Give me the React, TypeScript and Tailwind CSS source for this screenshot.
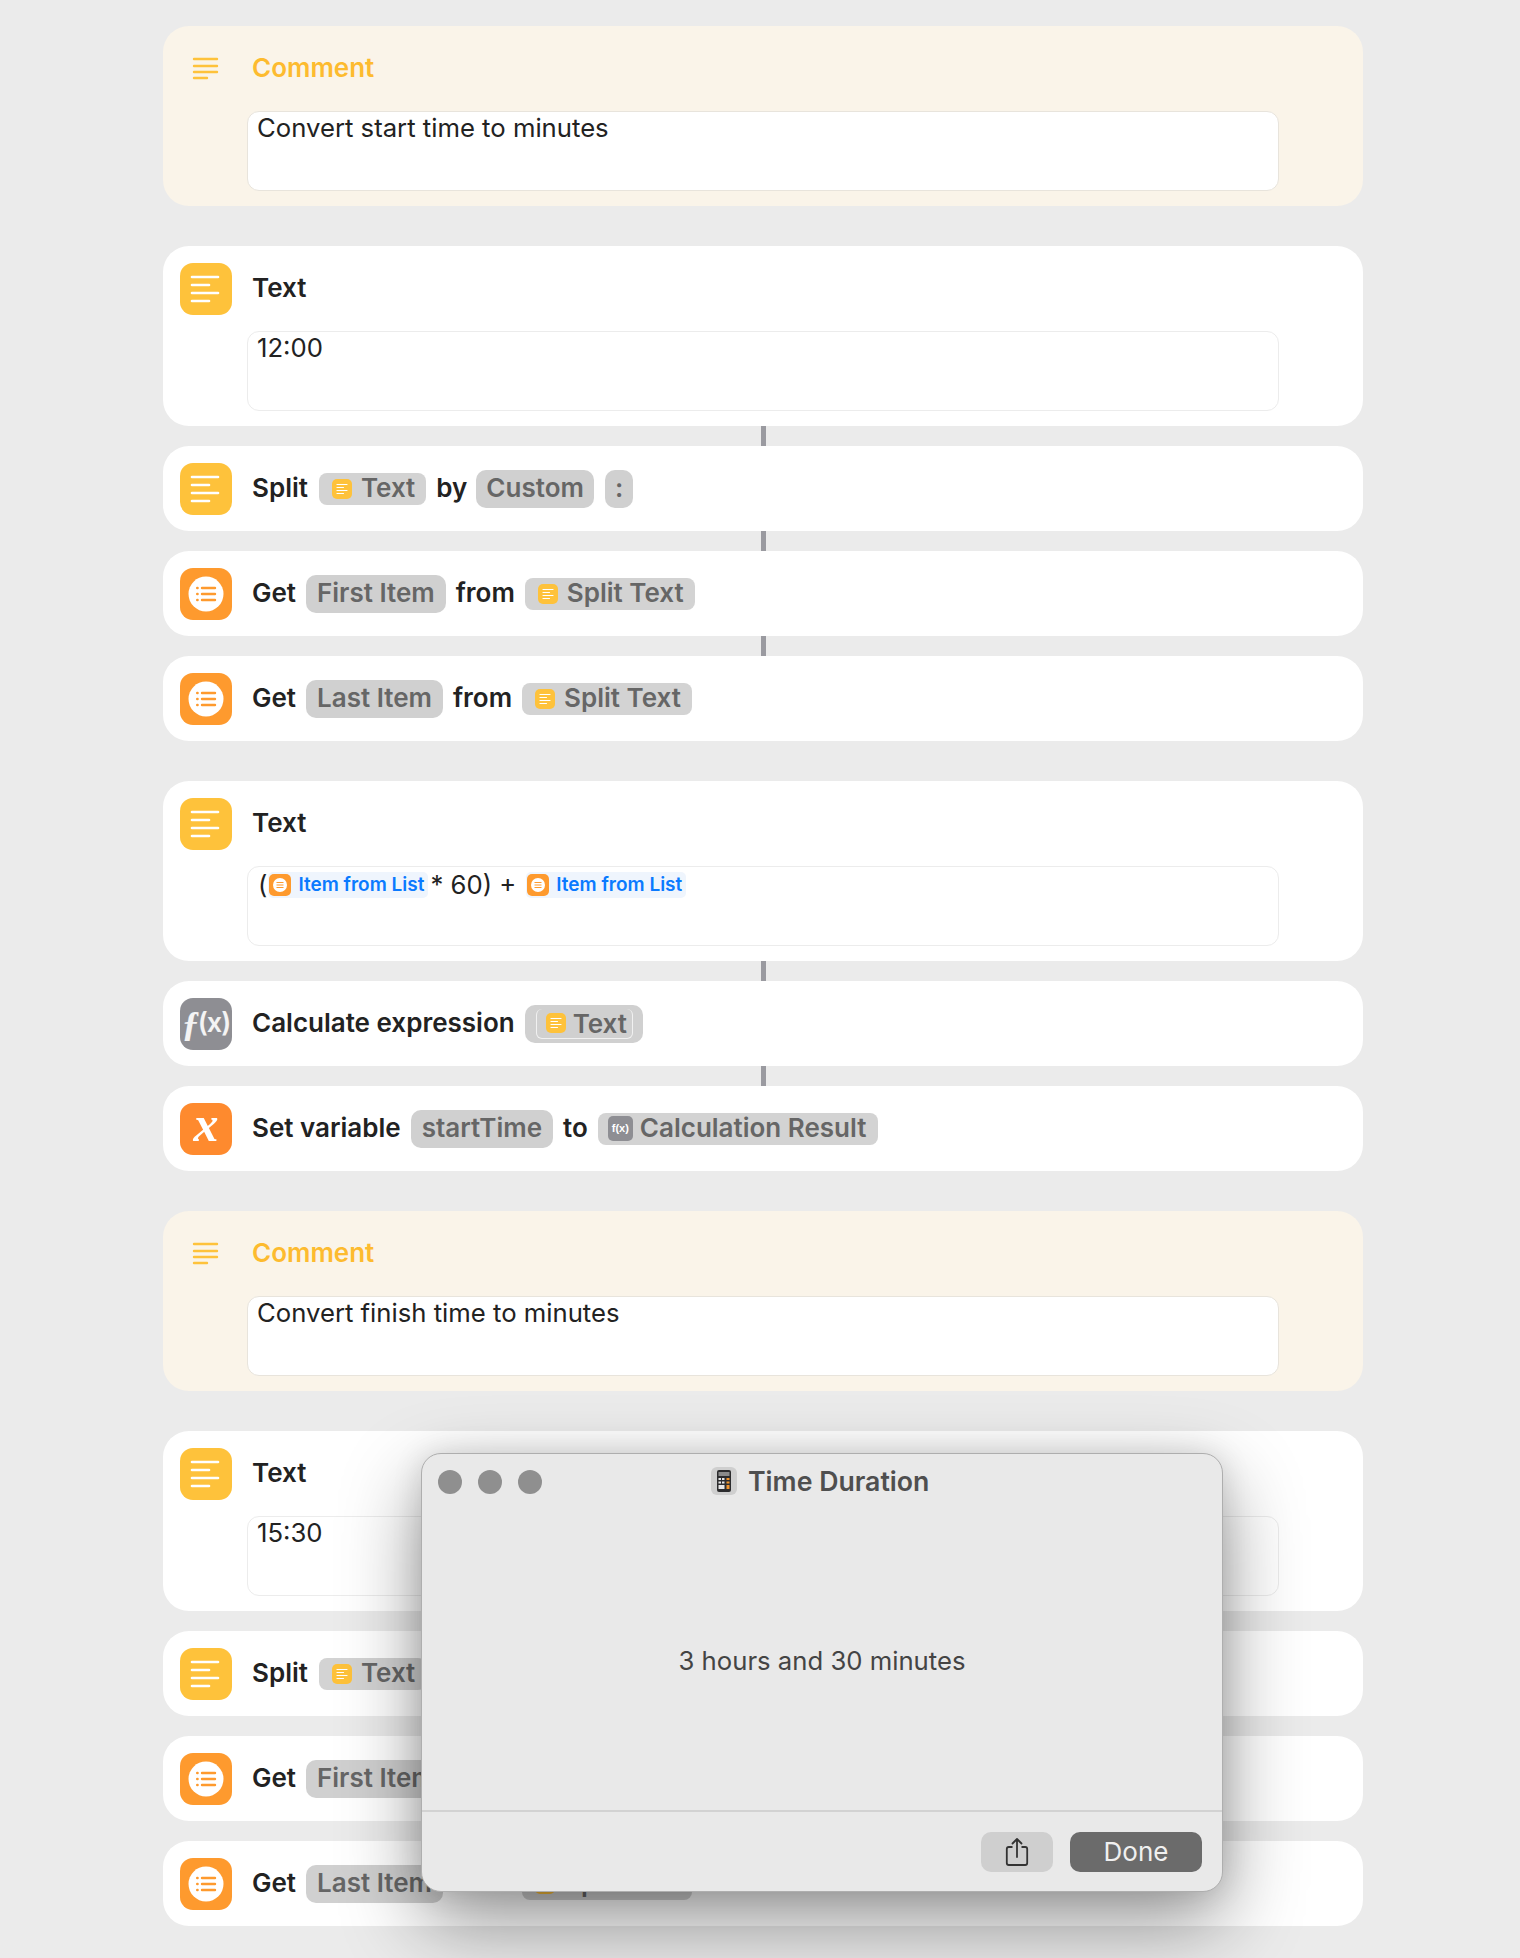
import React from "react";

const TextIcon = () => (
  <div className="h-[52px] w-[52px] shrink-0 rounded-[13px] bg-[#fec23b]">
    <svg viewBox="0 0 52 52" className="h-[52px] w-[52px]">
      <g stroke="#fff" strokeWidth="2.6" strokeLinecap="round">
        <path d="M12 14h26" />
        <path d="M12 22h17" />
        <path d="M12 30h26" />
        <path d="M12 38h17" />
      </g>
    </svg>
  </div>
);

const ListIcon = () => (
  <div className="h-[52px] w-[52px] shrink-0 rounded-[13px] bg-[#fe9a2e]">
    <svg viewBox="0 0 52 52" className="h-[52px] w-[52px]">
      <circle cx="26" cy="26" r="17.5" fill="#fff" />
      <g stroke="#fe9a2e" strokeWidth="2.4" strokeLinecap="round">
        <path d="M17.2 20h.4M17.2 26h.4M17.2 32h.4" />
        <path d="M22 20h13M22 26h13M22 32h13" />
      </g>
    </svg>
  </div>
);

const CalcIcon = () => (
  <div className="flex h-[52px] w-[52px] shrink-0 items-center justify-center rounded-[13px] bg-[#8e8e93] text-[27px] font-semibold text-white/90">
    <span className="-mr-[2px] font-['Liberation_Serif',serif] text-[36px] leading-none font-bold italic">ƒ</span>
    <span className="font-['Inter',sans-serif] tracking-[-1px]">(x)</span>
  </div>
);

const VarIcon = () => (
  <div className="flex h-[52px] w-[52px] shrink-0 items-center justify-center rounded-[13px] bg-[#fe8a2e] font-['Liberation_Serif',serif] text-[50px] leading-none font-bold text-white italic">
    <span className="-mt-[10px]">x</span>
  </div>
);

const CommentIcon = () => (
  <div className="h-[52px] w-[52px] shrink-0">
    <svg viewBox="0 0 52 52" className="h-[52px] w-[52px]">
      <g stroke="#fec23b" strokeWidth="2.4" strokeLinecap="round">
        <path d="M14 16h23" />
        <path d="M14 23h23" />
        <path d="M14 29h23" />
        <path d="M14 35h13" />
      </g>
    </svg>
  </div>
);

const MiniText = ({ size = "h-[20px] w-[20px]" }: { size?: string }) => (
  <svg viewBox="0 0 20 20" className={size}>
    <rect width="20" height="20" rx="5" fill="#fec23b" />
    <g stroke="#fff" strokeWidth="1.2" strokeLinecap="round">
      <path d="M5 5.5h10M5 8.5h6.5M5 11.5h10M5 14.5h6.5" />
    </g>
  </svg>
);

const Label = ({ children }: { children: React.ReactNode }) => <span className="pb-[2px]">{children}</span>;

const Pill = ({ children, tight }: { children: React.ReactNode; tight?: boolean }) => (
  <span
    className={`flex h-[38px] items-center rounded-[10px] bg-[#d0d0d0] pb-[2px] font-semibold text-[#666666] ${
      tight ? "px-[10px]" : "px-[11px]"
    }`}
  >
    {children}
  </span>
);

const VarPill = ({ children }: { children: React.ReactNode }) => (
  <span className="flex h-[32px] items-center gap-[9px] rounded-[8px] bg-[#d3d3d3] pr-[11px] pl-[13px] font-semibold text-[#666666]">
    <MiniText />
    <span className="pb-[2px]">{children}</span>
  </span>
);

const ListChip = () => (
  <span className="flex h-[26px] items-center gap-[7px] rounded-[5px] bg-[#eff5fd] pr-[4px] pl-[1px] text-[19px] font-semibold text-[#0a7aff]">
    <svg viewBox="0 0 22 22" className="h-[22px] w-[22px]">
      <rect width="22" height="22" rx="5" fill="#fe9a2e" />
      <circle cx="11" cy="11" r="7" fill="#fff" />
      <g stroke="#fe9a2e" strokeWidth="1.1">
        <path d="M7.5 8.5h7M7.5 11h7M7.5 13.5h7" />
      </g>
    </svg>
    Item from List
  </span>
);

const Row = ({ icon, children }: { icon: React.ReactNode; children: React.ReactNode }) => (
  <div className="flex h-[85px] items-center rounded-[26px] bg-white pl-[17px] text-[26px] font-semibold text-[#222222]">
    {icon}
    <div className="ml-[20px] flex items-center gap-[10px]">{children}</div>
  </div>
);

const TallCard = ({
  icon,
  title,
  comment,
  children,
}: {
  icon: React.ReactNode;
  title: string;
  comment?: boolean;
  children: React.ReactNode;
}) => (
  <div className={`h-[180px] rounded-[26px] ${comment ? "bg-[#faf4e9]" : "bg-white"}`}>
    <div className="flex h-[85px] items-center pl-[17px]">
      {icon}
      <span className={`ml-[20px] pb-[2px] text-[26px] font-semibold ${comment ? "text-[#fdbb2f]" : "text-[#222222]"}`}>
        {title}
      </span>
    </div>
    <div
      className={`ml-[84px] h-[80px] w-[1032px] rounded-[12px] border bg-white px-[9px] pt-[1px] text-[25.7px] leading-[30px] text-[#222222] ${
        comment ? "border-[#e8e4dc]" : "border-[#ececec]"
      }`}
    >
      {children}
    </div>
  </div>
);

const Connector = () => (
  <div className="flex h-[20px] justify-center">
    <div className="h-[20px] w-[5px] bg-[#9a9aa0]" />
  </div>
);

const SplitGroup = ({ time }: { time: string }) => (
  <div>
    <TallCard icon={<TextIcon />} title="Text">
      {time}
    </TallCard>
    <Connector />
    <Row icon={<TextIcon />}>
      <Label>Split</Label>
      <span className="ml-[1px]">
        <VarPill>Text</VarPill>
      </span>
      <Label>by</Label>
      <span className="-ml-[1px]">
        <Pill tight>Custom</Pill>
      </span>
      <span className="ml-[1px]">
        <Pill tight>:</Pill>
      </span>
    </Row>
    <Connector />
    <Row icon={<ListIcon />}>
      <Label>Get</Label>
      <Pill>First Item</Pill>
      <Label>from</Label>
      <VarPill>Split Text</VarPill>
    </Row>
    <Connector />
    <Row icon={<ListIcon />}>
      <Label>Get</Label>
      <Pill>Last Item</Pill>
      <Label>from</Label>
      <VarPill>Split Text</VarPill>
    </Row>
  </div>
);

const TimeDuration = () => (
  <div className="absolute top-[1453px] left-[421px] flex h-[439px] w-[802px] flex-col rounded-[20px] border border-[#aeaeae] bg-[#e9e9e9] shadow-[0_30px_80px_rgba(0,0,0,0.42),0_0_30px_rgba(0,0,0,0.12)]">
    <div className="relative flex h-[56px] items-center">
      <div className="ml-[16px] flex gap-[16px]">
        <div className="h-[24px] w-[24px] rounded-full bg-[#8f8f8f]" />
        <div className="h-[24px] w-[24px] rounded-full bg-[#8f8f8f]" />
        <div className="h-[24px] w-[24px] rounded-full bg-[#8f8f8f]" />
      </div>
      <div className="absolute top-[7px] left-[289px] flex items-center gap-[11px]">
        <svg viewBox="0 0 26 28" className="h-[28px] w-[26px]">
          <rect width="26" height="28" rx="6" fill="#cfcfcf" />
          <rect x="6" y="3" width="14" height="22" rx="2" fill="#2c2c2e" />
          <rect x="7.5" y="5" width="11" height="4" fill="#8a8a8a" />
          <g fill="#e6e6e6">
            <rect x="7.5" y="11" width="2.5" height="2" />
            <rect x="11" y="11" width="2.5" height="2" />
            <rect x="7.5" y="14.5" width="2.5" height="2" />
            <rect x="11" y="14.5" width="2.5" height="2" />
            <rect x="7.5" y="18" width="6" height="4" />
          </g>
          <g fill="#f0932b">
            <rect x="15.5" y="11" width="3" height="2" />
            <rect x="15.5" y="14.5" width="3" height="2" />
            <rect x="15.5" y="18" width="3" height="4" />
          </g>
        </svg>
        <span className="text-[26.7px] font-semibold text-[#4f4f4f]">Time Duration</span>
      </div>
    </div>
    <div className="flex h-[300px] items-center justify-center pt-[2px] text-[25.7px] text-[#444444]">
      3 hours and 30 minutes
    </div>
    <div className="flex flex-1 items-center justify-end gap-[17px] border-t-2 border-[#d2d2d2] pr-[20px]">
      <button className="flex h-[40px] w-[72px] items-center justify-center rounded-[10px] bg-[#cfcfcf]">
        <svg viewBox="0 0 26 30" className="h-[30px] w-[26px]" fill="none" stroke="#333333" strokeWidth="1.8">
          <path d="M8.5 10H4.8A2 2 0 0 0 2.8 12v14a2 2 0 0 0 2 2h16.4a2 2 0 0 0 2-2V12a2 2 0 0 0-2-2h-3.7" />
          <path d="M13 20V2M8.5 6.5 13 2l4.5 4.5" strokeLinecap="round" strokeLinejoin="round" />
        </svg>
      </button>
      <button className="h-[40px] w-[132px] rounded-[10px] bg-[#6b6b6b] pb-[1px] text-[26px] text-[#f0f0f0]">Done</button>
    </div>
  </div>
);

export default function App() {
  return (
    <div className="relative h-[1958px] overflow-hidden bg-[#ebebeb] pt-[26px] font-['Inter',sans-serif]">
      <div className="ml-[163px] flex w-[1200px] flex-col gap-[40px]">
        <TallCard icon={<CommentIcon />} title="Comment" comment>
          Convert start time to minutes
        </TallCard>

        <SplitGroup time="12:00" />

        <div>
          <TallCard icon={<TextIcon />} title="Text">
            <div className="flex items-center pt-[2px]">
              <span className="mr-[1px] ml-[1px]">(</span>
              <ListChip />
              <span className="mx-[2px]">* 60) +</span>
              <span className="ml-[8px]">
                <ListChip />
              </span>
            </div>
          </TallCard>
          <Connector />
          <Row icon={<CalcIcon />}>
            <Label>Calculate expression</Label>
            <span className="flex h-[38px] items-center rounded-[10px] bg-[#d0d0d0] pr-[10px] pl-[11px] font-semibold text-[#666666]">
              <span className="flex h-[30px] items-center gap-[7px] rounded-[6px] border-x border-b border-white/70 pr-[5px] pl-[9px]">
                <MiniText size="h-[22px] w-[20px]" />
                Text
              </span>
            </span>
          </Row>
          <Connector />
          <Row icon={<VarIcon />}>
            <Label>Set variable</Label>
            <Pill>startTime</Pill>
            <Label>to</Label>
            <span className="flex h-[32px] items-center gap-[7px] rounded-[8px] bg-[#d3d3d3] pr-[12px] pl-[10px] font-semibold text-[#666666]">
              <span className="flex h-[25px] w-[25px] items-center justify-center rounded-[5px] bg-[#8e8e93] font-['Liberation_Sans',sans-serif] text-[11px] font-bold text-white">
                f(x)
              </span>
              <span className="pb-[2px]">Calculation Result</span>
            </span>
          </Row>
        </div>

        <TallCard icon={<CommentIcon />} title="Comment" comment>
          Convert finish time to minutes
        </TallCard>

        <SplitGroup time="15:30" />
      </div>
      <TimeDuration />
    </div>
  );
}
